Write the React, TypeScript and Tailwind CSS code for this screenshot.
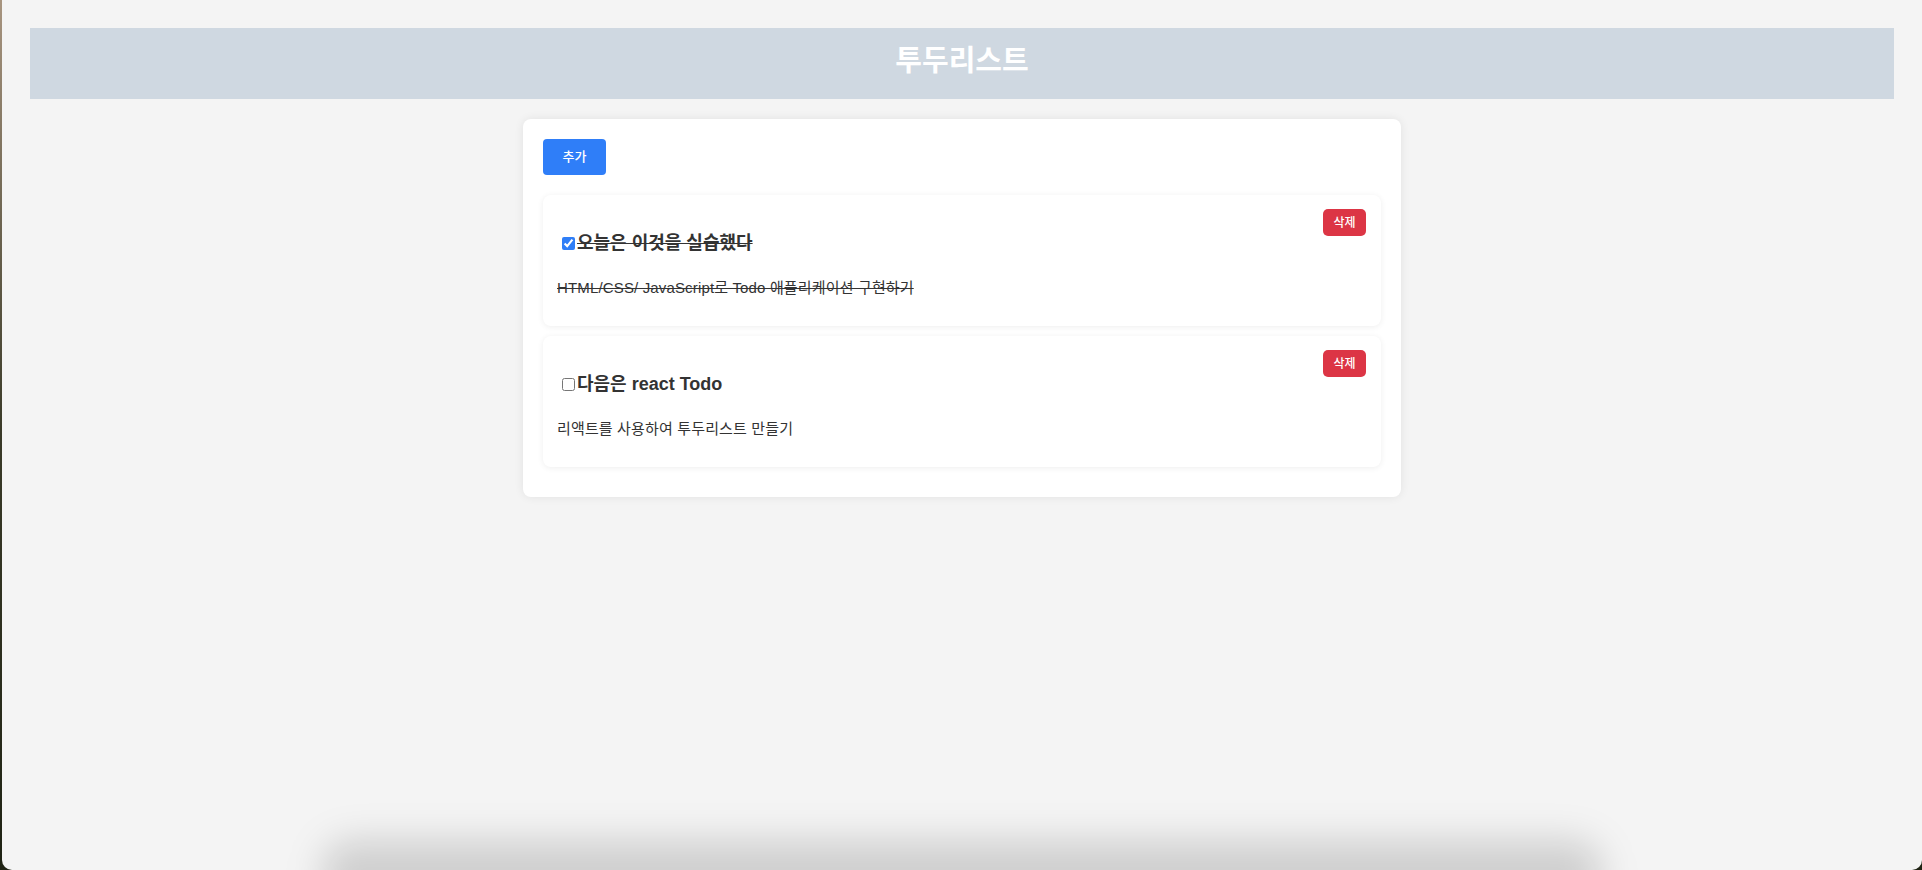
import React, { useState } from 'react';

type Todo = {
  id: number;
  title: string;
  desc: string;
  done: boolean;
};

const initialTodos: Todo[] = [
  { id: 1, title: '오늘은 이것을 실습했다', desc: 'HTML/CSS/ JavaScript로 Todo 애플리케이션 구현하기', done: true },
  { id: 2, title: '다음은 react Todo', desc: '리액트를 사용하여 투두리스트 만들기', done: false },
];

const font = { fontFamily: '"Liberation Sans", "Noto Sans CJK KR", sans-serif' };

const TodoItem = ({ todo, onToggle, onDelete }: { todo: Todo; onToggle: () => void; onDelete: () => void }) => {
  return (
    <li className="relative bg-white rounded-lg px-[14px] pt-[37px] pb-[28px] shadow-[0_1px_6px_rgba(0,0,0,0.07)]">
      <button
        onClick={onDelete}
        className="absolute top-[14px] right-[15px] w-[43px] h-[27px] rounded-[5px] bg-[#dc3545] text-white text-[12px] font-medium leading-none"
      >
        삭제
      </button>
      <div className={`flex items-center h-[22px] text-[18px] font-bold text-[#333] ${todo.done ? 'line-through' : ''}`}>
        <input
          type="checkbox"
          checked={todo.done}
          onChange={onToggle}
          className="ml-[5px] mr-[2px] w-[13px] h-[13px] accent-[#2f7ef7]"
        />
        <span>{todo.title}</span>
      </div>
      <p className={`mt-[24px] h-[20px] leading-[20px] text-[15px] tracking-[0.15px] text-[#333] ${todo.done ? 'line-through' : ''}`}>
        {todo.desc}
      </p>
    </li>
  );
};

const App = () => {
  const [todos, setTodos] = useState<Todo[]>(initialTodos);

  const toggle = (id: number) =>
    setTodos(todos.map(t => (t.id === id ? { ...t, done: !t.done } : t)));

  const remove = (id: number) => setTodos(todos.filter(t => t.id !== id));

  return (
    <div className="relative h-[870px] overflow-hidden bg-gradient-to-b from-[#a89580] via-[#3a3a28] to-[#1f2314] pl-[2px]" style={font}>
      <div className="relative h-full overflow-hidden rounded-b-[10px] bg-[#f4f4f4] px-[28px] pt-[28px]">
        {/* Header */}
        <header className="flex h-[71px] items-center justify-center bg-[#cfd8e1]">
          <h1 className="text-[29px] font-bold text-white -mt-[3px]">투두리스트</h1>
        </header>

        {/* Todo card */}
        <main className="mx-auto mt-[20px] w-[878px] rounded-lg bg-white p-5 shadow-[0_0_10px_rgba(0,0,0,0.08)]">
          <button className="h-[36px] w-[63px] rounded-[4px] bg-[#2f7ef8] text-[13px] font-medium text-white">추가</button>
          <ul className="mt-[20px] flex flex-col gap-[10px] pb-[10px]">
            {todos.map(todo => (
              <TodoItem key={todo.id} todo={todo} onToggle={() => toggle(todo.id)} onDelete={() => remove(todo.id)} />
            ))}
          </ul>
        </main>

        {/* shadow from the window below */}
        <div className="absolute bottom-[-40px] left-[320px] right-[320px] h-[70px] rounded-[30px] bg-black/15 blur-[18px]" />
      </div>
    </div>
  );
};

export default App;
